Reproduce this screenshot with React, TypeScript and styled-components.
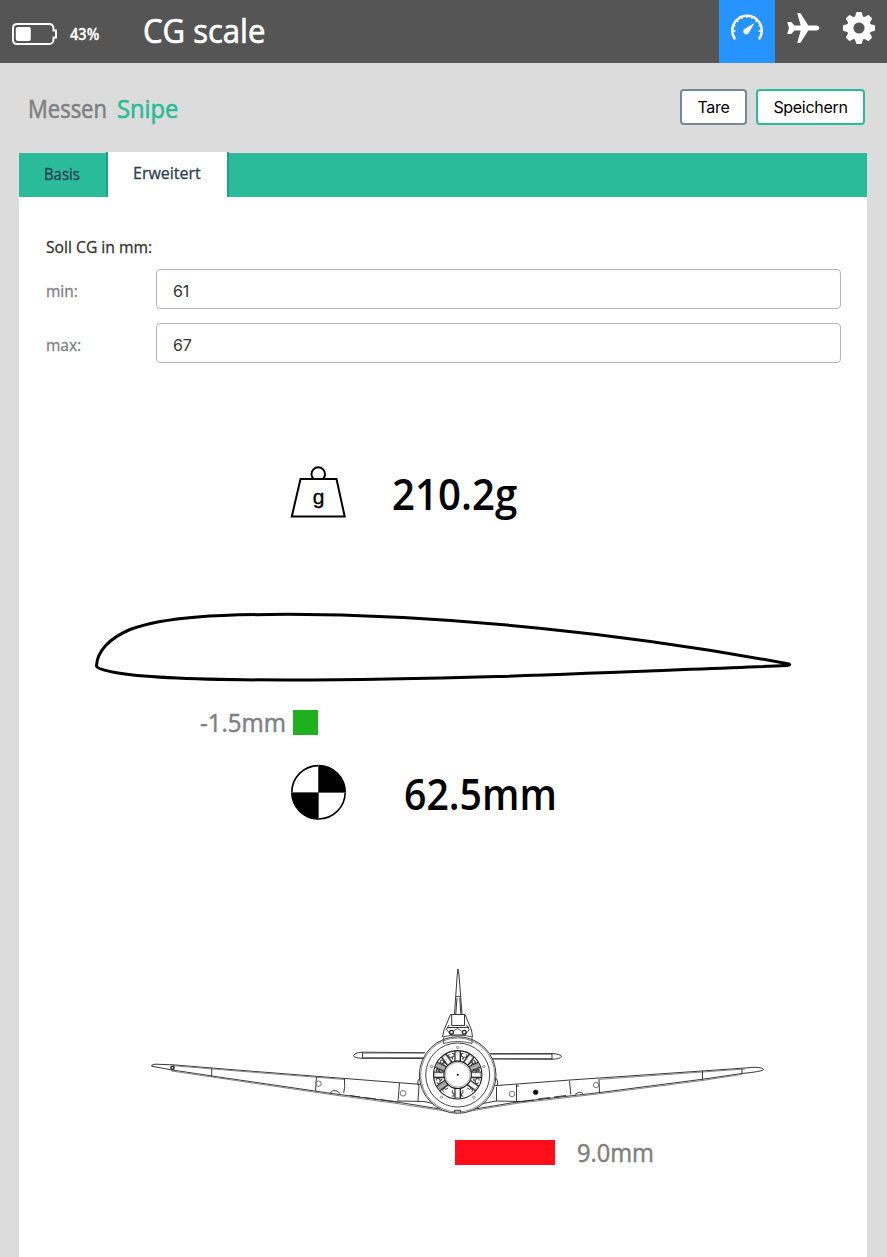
import React from "react";
import styled, { createGlobalStyle } from "styled-components";

const Global = createGlobalStyle`
  * { box-sizing: border-box; }
  body { margin: 0; background: #dcdcdc; font-family: "Trebuchet MS", "Open Sans", sans-serif; }
`;
const Page = styled.div`
  width: 887px; height: 1257px; overflow: hidden;
  display: flex; flex-direction: column; background: #dcdcdc;
`;
const Header = styled.header`
  height: 63px; background: #555; color: #fff; display: flex; flex: none;
`;
const Battery = styled.div`
  width: 142px; padding: 22px 0 0 11px; display: flex; align-items: flex-start; gap: 12px;
  span { margin-top: 3px; }
`;
const Text = styled.span<{ size: number; w: number; color?: string; weight?: number; narrow?: number; stroke?: number }>`
  display: block;
  flex: none;
  width: ${(p) => p.w}px;
  font-size: ${(p) => p.size}px;
  line-height: 1.2;
  color: ${(p) => p.color ?? "inherit"};
  font-weight: ${(p) => p.weight ?? 400};
  -webkit-text-stroke: ${(p) => p.stroke ?? 0.3}px currentColor;
  transform: scaleX(${(p) => p.narrow ?? 1});
  transform-origin: left;
  font-stretch: 88%;
  text-align: left;
  white-space: nowrap;
`;
const AppName = styled.div`flex: 1; padding: 12px 0 0 1px;`;
const NavItem = styled.div<{ active?: boolean }>`
  width: 56px; height: 63px; background: ${(p) => (p.active ? "#2693ff" : "transparent")};
  svg { display: block; }
`;
const TitleRow = styled.div`
  height: 89px; flex: none; padding: 26px 22px 0 28px; display: flex; align-items: flex-start;
`;
const Title = styled.div`flex: 1; display: flex; gap: 10px; padding-top: 4px;`;
const Button = styled.button<{ edge: string; w: number }>`
  width: ${(p) => p.w}px; height: 36px; margin-left: 9px; padding: 0;
  border: 2px solid ${(p) => p.edge}; border-radius: 4px; background: #fff; color: #000;
  font: 400 16px/32px Inter, sans-serif; letter-spacing: -0.3px;
`;
const Tabs = styled.div`
  height: 45px; margin: 0 20px 0 19px; flex: none; display: flex;
  background: linear-gradient(#dcdcdc 1px, #2abb9b 1px);
`;
const Tab = styled.div<{ active?: boolean; w: number }>`
  width: ${(p) => p.w}px; padding: ${(p) => (p.active ? 12 : 13)}px 0 0 25px;
  color: #2c3e50; border-right: 2px solid #22a085;
  background: ${(p) => (p.active ? "#fff" : "transparent")};
`;
const Card = styled.main`flex: 1; margin: 0 20px 0 19px; background: #fff; padding: 41px 26px 0 27px;`;
const Legend = styled.div`height: 31px; color: #333;`;
const Field = styled.label`
  display: flex; height: 40px; margin-bottom: 14px; align-items: center; color: #808080;
`;
const Label = styled.div`width: 110px; padding-top: 6px;`;
const Input = styled.input`
  flex: 1; height: 40px; border: 1px solid #b5b5b5; border-radius: 4px; padding: 4px 17px 0 16px;
  font: 16px Inter, sans-serif; letter-spacing: -0.2px; color: #333; background: #fff; min-width: 0;
`;
const Row = styled.div<{ h: number; left?: number; gap?: number; top?: number }>`
  height: ${(p) => p.h}px; margin-top: ${(p) => p.top ?? 0}px; padding-left: ${(p) => p.left ?? 0}px;
  display: flex; align-items: center; gap: ${(p) => p.gap ?? 0}px;
  svg { display: block; flex: none; }
`;
const Reading = styled.div`padding-top: 4px;`;
const Deviation = styled.div`padding-bottom: 2px;`;
const Bar = styled.div<{ w: number; fill: string }>`
  width: ${(p) => p.w}px; height: 25px; background: ${(p) => p.fill};
`;

const BatteryIcon = () => (
  <svg width="47" height="24" viewBox="11 22 47 24" fill="none">
    <path d="M17.500 24h31.500q4 0 4.500 4v2.500h2.500v7h-2.500v2.500q-.5 4-4.500 4H17q-4 0-4-4V28q0-4 4.500-4z" stroke="#fff" strokeWidth="1.900" />
    <rect x="15.800" y="27" width="15" height="14" rx="2" fill="#fff" />
  </svg>
);
const GaugeIcon = () => (
  <svg width="56" height="56" viewBox="719 0 56 56" fill="none" stroke="#fff">
    <path d="M735.200 39.300A14.700 14.700 0 1 1 758.800 39.300" strokeWidth="2.500" />
    <path d="M733.500 31h2M760.500 31h-2M737.200 20.700l1.300 1.300M747 16v2M756.800 20.700l-1.300 1.300M742 17.700l.5 1.300M752 17.700l-.5 1.300M733.800 25.500l1.500.5M760.200 25.500l-1.500.5" strokeWidth="1.400" />
    <path d="M754.500 23L749.200 32.200A3 3 0 1 1 745.300 28.600z" fill="#fff" stroke="none" />
  </svg>
);
const PlaneIcon = () => (
  <svg width="56" height="56" viewBox="775 0 56 56" fill="#fff">
    <path d="M797.200 13h2.300q1 0 1.500.9L808.300 25.500h8q3 .2 3 2.500t-3 2.500h-8L801 42.100q-.5.900-1.500.9h-2.300L800.700 30.500h-6.200L791.300 34H787.200L789 28l-1.800-6h4.100l3.200 3.500h6.200z" />
  </svg>
);
const GearIcon = () => (
  <svg width="56" height="56" viewBox="831 0 56 56">
    <g transform="translate(859 28)">
      <circle r="8.700" fill="none" stroke="#fff" strokeWidth="6.200" />
      {[0, 45, 90, 135, 180, 225, 270, 315].map((a) => (
        <path key={a} transform={`rotate(${a})`} d="M-5.300-10Q-3.200-12.200-2.900-15.200Q-2.800-16-2-16H2Q2.800-16 2.900-15.200Q3.200-12.200 5.300-10z" fill="#fff" />
      ))}
    </g>
  </svg>
);
const WeightIcon = () => (
  <svg width="56" height="54" viewBox="290 465 56 54" fill="none" stroke="#000" strokeWidth="2">
    <path d="M300.500 479H336.500L344.700 516.500H291.800z" />
    <path d="M313.500 479A6.800 6.800 0 1 1 323 479" />
    <text x="318.500" y="503.500" textAnchor="middle" fontFamily="Liberation Sans" fontSize="21" fill="#000" strokeWidth=".35">g</text>
  </svg>
);
const Airfoil = () => (
  <svg width="700" height="74" viewBox="94 610 700 74" fill="none" stroke="#000" strokeWidth="3" strokeLinejoin="round">
    <path d="M96.500 666C97 651 110 638 130 629.500C165 616 222 614.500 288 614.300C450 615 630 634 789 664Q791 665 787 665.500C640 671 470 680 288 680C205 680 145 678 115 672.500Q97 669 96.500 666z" />
  </svg>
);
const CgIcon = () => (
  <svg width="56" height="56" viewBox="290 764 56 56">
    <circle cx="318.500" cy="792.300" r="26.700" fill="#fff" stroke="#000" strokeWidth="1.600" />
    <path d="M318 792.500V765.500A27 27 0 0 1 345.500 792.500zM318.500 792.500V819.500A27 27 0 0 1 291.500 792.500z" />
    <path d="M291 792.500h55M318.500 765v55" stroke="#555" strokeWidth=".8" />
  </svg>
);
const FrontView = () => (
  <svg width="620" height="152" viewBox="148 965 620 152" fill="none" stroke="#222" strokeWidth=".9">
    {/* tailplane */}
    <g fill="#fff">
      <path d="M425 1052.700L362 1052.200Q354 1053 353.500 1055.500Q354 1058 362 1058.300L425 1058.500M362.500 1052.200v6" />
      <path d="M490 1053.600L552 1053.500Q561 1054.200 561.500 1056.700Q560 1059 552 1059.300L490 1059M552 1053.500v5.800" />
    </g>
    <path d="M362 1053h62M362 1057.700h62M491 1054.200h61M491 1058.500h61" stroke="#555" />
    {/* left wing */}
    <path d="M422 1084.500L345 1078.500L240 1070.300L173 1064.800L155 1064.200Q151 1064.800 151.500 1066.200L171 1069.800L212 1076L332 1093.500L400 1102.500L440 1109" />
    <path d="M173 1065.700L240 1071.200L345 1079.500M171 1070.900L212 1077L332 1094.700L397 1103.500L445 1111" stroke="#777" />
    <path d="M211.700 1068v8.500M316.500 1077l-1 14M344.500 1079q.8 8-.8 14M399.500 1083l-1.500 18M398 1101l26 .5L440 1105M419 1086l-1 15" />
    <path d="M330 1093q3-4 7-2l3 2.500M350 1095.500l10 1.500M364 1097.500l12 1.500M380 1099.500l18 2.500" />
    <circle cx="172.500" cy="1067.800" r="1.600" strokeWidth="1.500" />
    <circle cx="318.500" cy="1083.700" r="2.700" stroke="#666" />
    <circle cx="403" cy="1093.300" r="2.800" stroke="#666" />
    {/* right wing */}
    <path d="M495 1085.700L570 1080L702 1071L745 1068L755 1067.300Q763 1067.500 763.500 1069.500Q763 1071.500 742 1073.500L702 1079.300L600 1092.500L517 1102L475 1109" />
    <path d="M600 1079.300L702 1072L745 1069M742 1074.400L702 1080.500L600 1093.700L517 1103.300L470 1111" stroke="#777" />
    <path d="M702.500 1071v8.500M742 1068.800v4.500M599 1079l.5 13.500M569.500 1081l1.300 13.500M516.500 1084.500v17M496.500 1087v14M475 1105L496 1101l25 .5M516 1086h3" />
    <path d="M575 1094.500q5-4 8-1M566 1095.500l-12 1.500M550 1097.500l-12 1.500M534 1100l-17 2" />
    <circle cx="512" cy="1094" r="2.800" stroke="#666" />
    <circle cx="596" cy="1085" r="2.700" stroke="#666" />
    <circle cx="535.700" cy="1092.300" r="2.300" fill="#000" />
    {/* cowling */}
    <circle cx="457.700" cy="1075" r="38.300" fill="#fff" />
    <circle cx="457.700" cy="1075" r="37" stroke="#555" strokeWidth=".7" />
    <circle cx="457.700" cy="1075" r="32" stroke="#333" />
    <path d="M420 1078q-4 4-1 8M495.500 1078q4 4 1 8" />
    {[0, 72, 144, 216, 288].map((a) => (
      <circle key={a} cx="457.700" cy="1047.500" r="1.200" stroke="#777" strokeWidth=".8" transform={`rotate(${a} 457.700 1075)`} />
    ))}
    {/* fin and canopy */}
    <path d="M454.500 1014L457.200 975L458 969L459 975L462 1014M455.500 997q2.500-1.500 5 0M457 998l-1.200 16M459.800 998l1 16" />
    <path d="M450.500 1014.500L444 1030L442.500 1037M465 1014.500L471.500 1030L472.500 1037" />
    <path d="M450.500 1014.500h14.500M451.700 1015v10.500h12.800V1015M448 1027.500h21M449 1025l-3 5M466.500 1025l3 5" />
    <path d="M442.500 1037Q457.700 1033 472.500 1037M443.500 1037.500v6q14-4 28.500 0v-6M447 1030l4 5h14l4-5M453.500 1031l4-2.500 4 2.500" stroke="#444" />
    <circle cx="451.500" cy="1032.300" r="1.900" strokeWidth="1.300" />
    <circle cx="464.200" cy="1032.300" r="1.900" strokeWidth="1.300" />
    {/* radial engine */}
    <circle cx="457.700" cy="1074.800" r="24.200" strokeWidth="1.100" />
    {[0, 36, 65, 90, 125, 180, 235, 270, 295, 324].map((a, i) => (
      <g key={a} transform={`rotate(${a} 457.700 1074.800)`}>
        <path d="M455 1051v10.500M460.400 1051v10.500" strokeWidth="1.300" />
        <path d="M452 1053.500h2v3h-1.500v3M463.500 1053.500h-2v3h1.500v3" stroke="#333" />
        <path d="M455.700 1052h4v9h-4z" fill={i === 2 || i === 6 || i === 8 ? "#aaa" : "#fff"} stroke="#666" strokeWidth=".6" />
      </g>
    ))}
    <circle cx="457.700" cy="1074.800" r="13.700" fill="#fff" strokeWidth="1.100" />
    <circle cx="457.700" cy="1074.800" r="12.300" stroke="#888" strokeWidth=".7" />
    <circle cx="457.700" cy="1074.800" r="1" fill="#000" stroke="none" />
    <path d="M454.500 1112.500v-2.200h6v2.200" />
  </svg>
);

export default function App() {
  return (
    <Page>
      <Global />
      <Header>
        <Battery><BatteryIcon /><Text size={16} w={30} weight={600} narrow={0.91} stroke={0.3}>43%</Text></Battery>
        <AppName><Text size={32} w={124} narrow={0.97} stroke={0.7}>CG scale</Text></AppName>
        <NavItem active><GaugeIcon /></NavItem>
        <NavItem><PlaneIcon /></NavItem>
        <NavItem><GearIcon /></NavItem>
      </Header>
      <TitleRow>
        <Title>
          <Text size={25} w={79} narrow={0.88} color="#808080" stroke={0.6}>Messen</Text>
          <Text size={25} w={64} narrow={0.95} color="#2abb9b" stroke={0.6}>Snipe</Text>
        </Title>
        <Button edge="#778899" w={67}>Tare</Button>
        <Button edge="#2abb9b" w={109}>Speichern</Button>
      </TitleRow>
      <Tabs>
        <Tab w={89}><Text size={16} w={36} narrow={0.93}>Basis</Text></Tab>
        <Tab w={121} active><Text size={16} w={68}>Erweitert</Text></Tab>
      </Tabs>
      <Card>
        <Legend><Text size={16} w={107} narrow={0.98}>Soll CG in mm:</Text></Legend>
        <Field><Label><Text size={16} w={33} narrow={0.97}>min:</Text></Label><Input defaultValue="61" /></Field>
        <Field><Label><Text size={16} w={36} narrow={0.97}>max:</Text></Label><Input defaultValue="67" /></Field>
        <Row h={54} top={102} left={244} gap={46}>
          <WeightIcon />
          <Reading><Text size={43} w={126} narrow={0.935} weight={600} stroke={0}>210.2g</Text></Reading>
        </Row>
        <Row h={74} top={91} left={48}><Airfoil /></Row>
        <Row h={25} top={26} left={154} gap={7}>
          <Deviation><Text size={25} w={86} narrow={0.96} color="#808080" stroke={0.5}>-1.5mm</Text></Deviation>
          <Bar w={25} fill="#1eb01e" />
        </Row>
        <Row h={56} top={29} left={244} gap={58}>
          <CgIcon />
          <Reading><Text size={43} w={152} narrow={0.912} weight={600} stroke={0}>62.5mm</Text></Reading>
        </Row>
        <Row h={152} top={145} left={102}><FrontView /></Row>
        <Row h={25} top={23} left={409} gap={22}>
          <Bar w={100} fill="#ff0d1a" />
          <Deviation><Text size={25} w={78} narrow={0.945} color="#808080" stroke={0.5}>9.0mm</Text></Deviation>
        </Row>
      </Card>
    </Page>
  );
}
